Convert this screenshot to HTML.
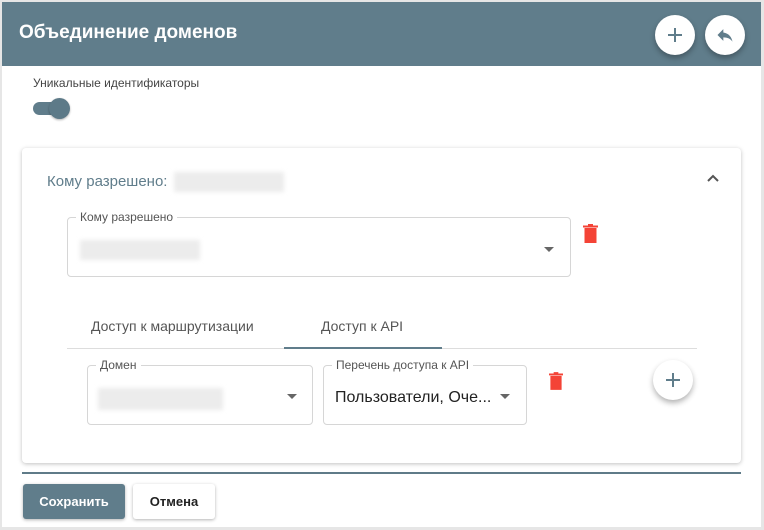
<!DOCTYPE html>
<html><head><meta charset="utf-8"><style>
*{box-sizing:border-box;margin:0;padding:0}
body{width:764px;height:530px;background:#e6e6e6;font-family:"Liberation Sans",Roboto,sans-serif;position:relative;overflow:hidden}
.main{position:absolute;left:2px;top:2px;width:759px;height:525px;background:#fff}
.hdr{position:absolute;left:0;top:0;width:759px;height:64px;background:#607d8b}
.hdr h1{position:absolute;left:17px;top:20px;color:#fff;font-size:19px;font-weight:bold}
.fab{position:absolute;width:40px;height:40px;border-radius:50%;background:#fff;box-shadow:0 3px 6px rgba(0,0,0,.3);display:flex;align-items:center;justify-content:center}
.abs{position:absolute}
.blur{position:absolute;background:#ececec;filter:blur(2px)}
.fld{position:absolute;border:1px solid #d6d6d6;border-radius:4px}
.lbl{position:absolute;top:-8px;left:8px;background:#fff;padding:0 4px;font-size:12px;color:#555}
.arr{position:absolute;width:0;height:0;border-left:5px solid transparent;border-right:5px solid transparent;border-top:5px solid #666}
.trash{position:absolute;width:15px;height:19px}
</style></head><body>
<div class="main">
<div class="hdr"><h1>Объединение доменов</h1></div>
<div class="fab" style="left:653px;top:13px"><svg width="18" height="18" viewBox="0 0 18 18"><path d="M9 2v14M2 9h14" stroke="#607d8b" stroke-width="2"/></svg></div>
<div class="fab" style="left:703px;top:13px"><svg width="20" height="20" viewBox="0 0 24 24"><path d="M10 9V5l-7 7 7 7v-4.1c5 0 8.5 1.6 11 5.1-1-5-4-10-11-11z" fill="#607d8b"/></svg></div>
<div class="abs" style="left:31px;top:74px;font-size:12px;color:#444">Уникальные идентификаторы</div>
<div class="abs" style="left:31px;top:100px;width:34px;height:13px;border-radius:7px;background:#607d8b"></div>
<div class="abs" style="left:47px;top:96px;width:21px;height:21px;border-radius:50%;background:#5d7a88;box-shadow:0 1px 2px rgba(0,0,0,.3)"></div>

<div class="abs" style="left:20px;top:146px;width:719px;height:315px;background:#fff;border-radius:4px;box-shadow:0 1px 4px rgba(0,0,0,.25)">
 <div class="abs" style="left:25px;top:25px;font-size:15px;color:#607d8b">Кому разрешено:</div>
 <div class="blur" style="left:152px;top:24px;width:110px;height:20px"></div>
 <svg class="abs" style="left:685px;top:26px" width="12" height="8" viewBox="0 0 12 8"><path d="M1 7l5-5 5 5" stroke="#555" stroke-width="2" fill="none"/></svg>
 <div class="fld" style="left:45px;top:69px;width:504px;height:60px"><div class="lbl">Кому разрешено</div>
  <div class="blur" style="left:12px;top:22px;width:120px;height:20px"></div>
  <div class="arr" style="left:476px;top:29px"></div></div>
 <svg class="trash" style="left:561px;top:76px" viewBox="0 0 15 19"><path d="M0 1.5h15v2H0zM5 0h5v2H5zM1.5 4h12v15h-12z" fill="#f44336"/></svg>
 <div class="abs" style="left:69px;top:170px;font-size:14px;color:#555">Доступ к маршрутизации</div>
 <div class="abs" style="left:299px;top:170px;font-size:14px;color:#555">Доступ к API</div>
 <div class="abs" style="left:45px;top:200px;width:630px;height:1px;background:#ddd"></div>
 <div class="abs" style="left:262px;top:199px;width:158px;height:2px;background:#607d8b"></div>
 <div class="fld" style="left:65px;top:217px;width:226px;height:60px"><div class="lbl">Домен</div>
  <div class="blur" style="left:10px;top:22px;width:125px;height:22px"></div>
  <div class="arr" style="left:199px;top:28px"></div></div>
 <div class="fld" style="left:301px;top:217px;width:204px;height:60px"><div class="lbl">Перечень доступа к API</div>
  <div class="abs" style="left:11px;top:23px;font-size:16px;color:#222">Пользователи, Оче...</div>
  <div class="arr" style="left:176px;top:28px"></div></div>
 <svg class="trash" style="left:527px;top:224px;width:14px;height:18px" viewBox="0 0 15 19"><path d="M0 1.5h15v2H0zM5 0h5v2H5zM1.5 4h12v15h-12z" fill="#f44336"/></svg>
 <div class="fab" style="left:631px;top:212px"><svg width="18" height="18" viewBox="0 0 18 18"><path d="M9 2v14M2 9h14" stroke="#607d8b" stroke-width="2"/></svg></div>
</div>
<div class="abs" style="left:20px;top:470px;width:719px;height:2px;background:#5f7b88"></div>
<div class="abs" style="left:21px;top:482px;width:102px;height:35px;background:#607d8b;border-radius:3px;box-shadow:0 1px 3px rgba(0,0,0,.3);color:#fff;font-size:13px;font-weight:bold;text-align:center;line-height:35px">Сохранить</div>
<div class="abs" style="left:131px;top:482px;width:82px;height:35px;background:#fff;border-radius:3px;box-shadow:0 1px 3px rgba(0,0,0,.3);color:#222;font-size:13px;font-weight:bold;text-align:center;line-height:35px">Отмена</div>
</div>
</body></html>
